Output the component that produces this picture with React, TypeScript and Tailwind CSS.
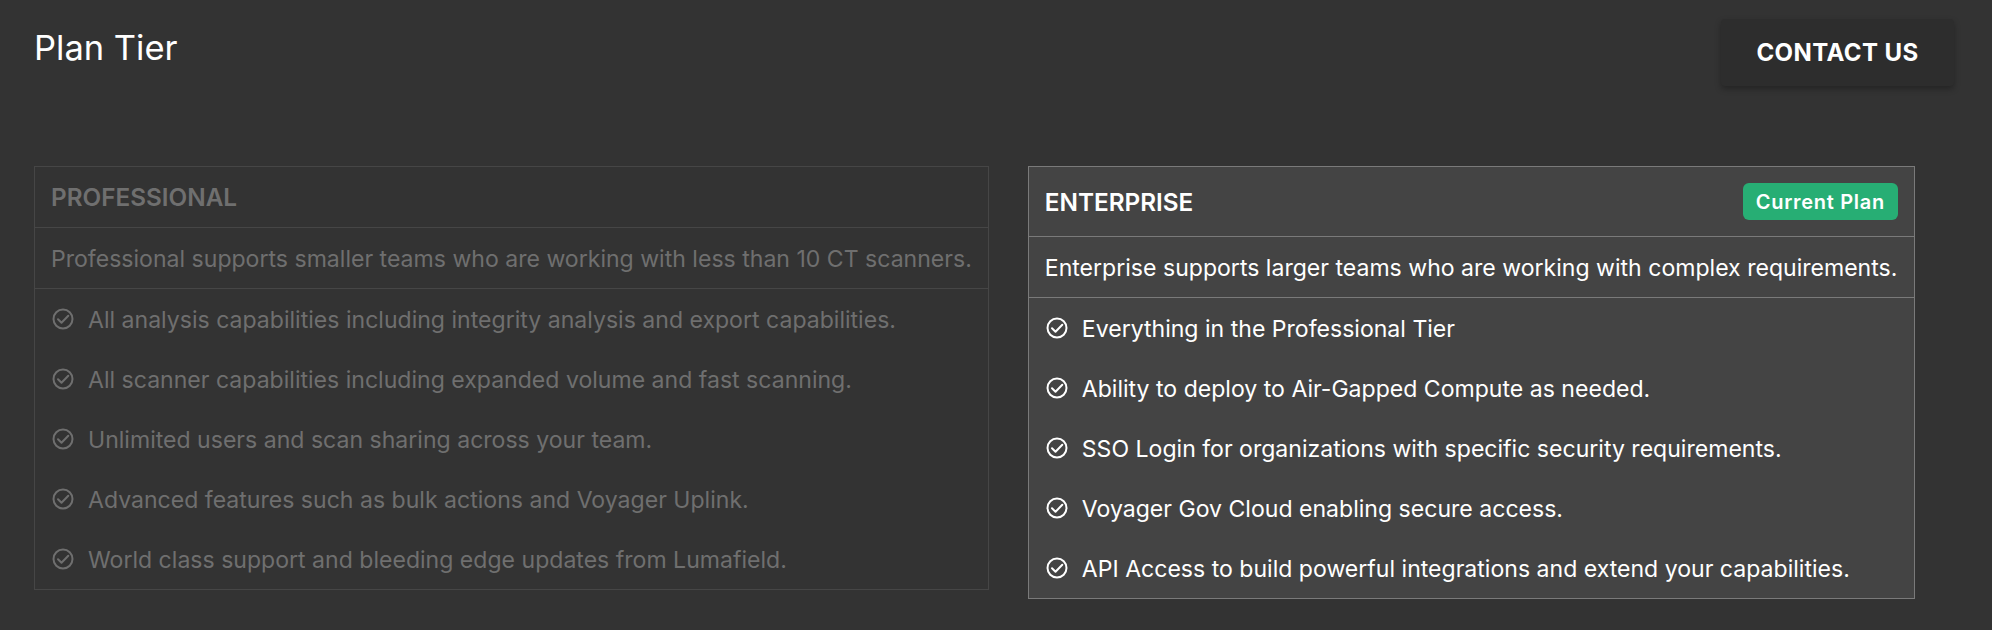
const plans = [
  {
    name: "PROFESSIONAL",
    description: "Professional supports smaller teams who are working with less than 10 CT scanners.",
    features: [
      "All analysis capabilities including integrity analysis and export capabilities.",
      "All scanner capabilities including expanded volume and fast scanning.",
      "Unlimited users and scan sharing across your team.",
      "Advanced features such as bulk actions and Voyager Uplink.",
      "World class support and bleeding edge updates from Lumafield.",
    ],
  },
  {
    name: "ENTERPRISE",
    description: "Enterprise supports larger teams who are working with complex requirements.",
    current: true,
    features: [
      "Everything in the Professional Tier",
      "Ability to deploy to Air-Gapped Compute as needed.",
      "SSO Login for organizations with specific security requirements.",
      "Voyager Gov Cloud enabling secure access.",
      "API Access to build powerful integrations and extend your capabilities.",
    ],
  },
]

function CheckIcon() {
  return (
    <svg viewBox="0 0 22 22" className="h-[22px] w-[22px] shrink-0" fill="none" stroke="currentColor" strokeWidth="2">
      <circle cx="11" cy="11" r="9.5" />
      <path d="M6 11.3l3.5 3.5 6.8-7" strokeLinecap="round" strokeLinejoin="round" />
    </svg>
  )
}

function PlanCard({ plan }: { plan: (typeof plans)[number] }) {
  const active = Boolean(plan.current)
  return (
    <div
      className={
        active
          ? "w-[887px] border border-[#7a7a7a] bg-[#444444] text-white"
          : "border border-[#464646] text-[#6f6f6f]"
      }
    >
      <div
        className={
          active
            ? "flex h-[70px] items-center justify-between border-b border-[#7a7a7a] px-4 pt-[2px]"
            : "flex h-[61px] items-center justify-between border-b border-[#464646] px-4"
        }
      >
        <span className="text-[24.3px] font-semibold">{plan.name}</span>
        {active && (
          <span className="-mt-[2px] flex h-[37px] w-[155px] items-center justify-center rounded-md bg-[#27ae74] text-[20px] font-semibold tracking-[0.7px]">
            Current Plan
          </span>
        )}
      </div>
      <div
        className={
          active
            ? "flex h-[61px] items-center border-b border-[#7a7a7a] px-4 pt-[2px] text-[23.07px]"
            : "flex h-[61px] items-center border-b border-[#464646] px-4 pt-[2px] text-[23.07px]"
        }
      >
        {plan.description}
      </div>
      <ul className="flex flex-col">
        {plan.features.map((feature) => (
          <li key={feature} className="flex h-[60px] items-center gap-[14px] pl-[17px] pr-4 text-[23.07px]">
            <CheckIcon />
            <span className="pt-[2px]">{feature}</span>
          </li>
        ))}
      </ul>
    </div>
  )
}

export default function App() {
  return (
    <div className="h-[630px] overflow-hidden bg-[#333333] font-['Inter',sans-serif]">
      <div className="flex items-start justify-between pl-[34px] pr-[38px] pt-[19px]">
        <h1 className="pt-[5px] text-[34.5px] font-normal leading-[48px] text-white">Plan Tier</h1>
        <button className="h-[67px] w-[233px] rounded-sm bg-[#2d2d2d] text-[24px] font-bold tracking-[0.4px] text-white shadow-[0_3px_6px_rgba(0,0,0,0.3)]">
          CONTACT US
        </button>
      </div>
      <div className="mt-[80px] flex items-start gap-[39px] pl-[34px]">
        {plans.map((plan) => (
          <PlanCard key={plan.name} plan={plan} />
        ))}
      </div>
    </div>
  )
}
